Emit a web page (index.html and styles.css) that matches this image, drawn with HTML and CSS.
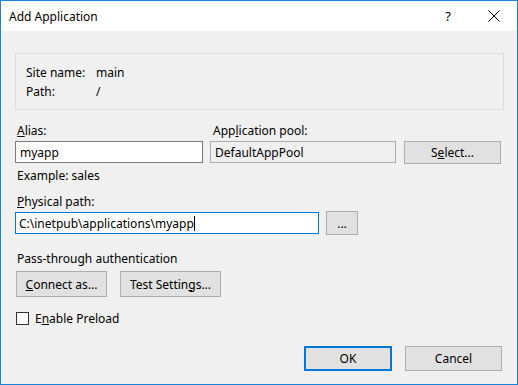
FILE: index.html
```html
<!DOCTYPE html>
<html lang="en">
<head>
  <meta charset="UTF-8">
  <title>Add Application</title>
  <link rel="stylesheet" href="styles.css">
</head>
<body>
  <div class="dialog">
    <div class="titlebar">
      <span class="title">Add Application</span>
      <span class="help">?</span>
      <span class="close">
        <svg width="12" height="12" viewBox="0 0 12 12"><path d="M0.5 0.5 L11.5 11.5 M11.5 0.5 L0.5 11.5" stroke="#000" stroke-width="1" fill="none"/></svg>
      </span>
    </div>

    <div class="content">
      <div class="group">
        <div class="info-row"><span class="info-key">Site name:</span><span>main</span></div>
        <div class="info-row"><span class="info-key">Path:</span><span>/</span></div>
      </div>

      <div class="alias-grid">
        <label class="lbl"><u>A</u>lias:</label>
        <label class="lbl lbl-pool">App<u>l</u>ication pool:</label>
        <span></span>
        <div class="textbox">myapp</div>
        <div class="textbox disabled">DefaultAppPool</div>
        <button class="btn btn-select">S<u>e</u>lect...</button>
        <div class="hint">Example: sales</div>
      </div>

      <label class="lbl lbl-path"><u>P</u>hysical path:</label>
      <div class="path-row">
        <div class="textbox focused">C:\inetpub\applications\myapp<span class="caret"></span></div>
        <button class="btn btn-browse">...</button>
      </div>

      <div class="section">Pass-through authentication</div>
      <div class="auth-row">
        <button class="btn btn-connect"><u>C</u>onnect as...</button>
        <button class="btn btn-test">Test Settin<u>g</u>s...</button>
      </div>

      <div class="check-row">
        <span class="checkbox"></span>
        <span>E<u>n</u>able Preload</span>
      </div>

      <div class="footer">
        <button class="btn btn-ok">OK</button>
        <button class="btn btn-cancel">Cancel</button>
      </div>
    </div>
  </div>
</body>
</html>
```

FILE: styles.css
```css
* {
  box-sizing: border-box;
}
body {
  margin: 0;
  font-family: "Noto Sans", "Open Sans", sans-serif;
  font-size: 12px;
  color: #000;
}
.dialog {
  width: 518px;
  height: 385px;
  border: 1px solid #1883d7;
  background-color: #f0f0f0;
  display: flex;
  flex-direction: column;
}
.titlebar {
  height: 30px;
  background-color: #fff;
  display: flex;
  align-items: center;
  padding-left: 8px;
}
.title {
  flex: 1;
  font-size: 12px;
}
.help {
  width: 46px;
  text-align: center;
  font-size: 13px;
}
.close {
  width: 46px;
  display: flex;
  justify-content: center;
  align-items: center;
}
.content {
  flex: 1;
  padding: 0 14px 0 14px;
  display: flex;
  flex-direction: column;
}
.group {
  margin-top: 22px;
  height: 57px;
  width: 489px;
  border: 1px solid #dcdcdc;
  padding: 9px 0 0 10px;
}
.info-row {
  display: flex;
  height: 19px;
  align-items: center;
}
.info-key {
  width: 70px;
}
.alias-grid {
  margin-top: 10px;
  display: grid;
  grid-template-columns: 188px 186px 97px;
  column-gap: 7px;
  grid-template-rows: 21px 22px 24px;
  align-items: center;
}
.lbl {
  padding-left: 2px;
}
.lbl-pool {
  padding-left: 3px;
}
.textbox {
  height: 22px;
  border: 1px solid #7a7a7a;
  background-color: #fff;
  padding: 0 4px;
  display: flex;
  align-items: center;
  white-space: nowrap;
}
.textbox.disabled {
  background-color: #f0f0f0;
  border-color: #acacac;
}
.textbox.focused {
  border-color: #0078d7;
  width: 304px;
  padding-left: 3px;
}
.caret {
  display: inline-block;
  width: 1px;
  height: 15px;
  background-color: #000;
}
.hint {
  grid-column: 1 / 3;
  padding-left: 2px;
}
.btn {
  font-family: inherit;
  font-size: 12px;
  color: #000;
  background-color: #e1e1e1;
  border: 1px solid #adadad;
  padding: 0;
  height: 24px;
}
.btn-select {
  width: 97px;
  height: 23px;
  margin-left: 1px;
}
.lbl-path {
  margin-top: 4px;
  height: 20px;
  display: flex;
  align-items: center;
}
.path-row {
  display: flex;
  gap: 7px;
  align-items: center;
}
.btn-browse {
  width: 32px;
  height: 24px;
}
.section {
  margin-top: 12px;
  height: 22px;
  display: flex;
  align-items: center;
  padding-left: 2px;
}
.auth-row {
  margin-top: 2px;
  display: flex;
  gap: 13px;
  padding-left: 1px;
}
.btn-connect {
  width: 91px;
  height: 26px;
}
.btn-test {
  width: 101px;
  height: 26px;
}
.check-row {
  margin-top: 13px;
  display: flex;
  align-items: center;
  gap: 6px;
  padding-left: 1px;
}
.checkbox {
  width: 13px;
  height: 13px;
  border: 1px solid #333;
  background-color: #fff;
}
.footer {
  margin-top: 19px;
  display: flex;
  justify-content: flex-end;
  gap: 13px;
  padding-right: 1px;
}
.btn-ok {
  width: 88px;
  height: 25px;
  border: 2px solid #0078d7;
}
.btn-cancel {
  width: 97px;
  height: 25px;
}
```
